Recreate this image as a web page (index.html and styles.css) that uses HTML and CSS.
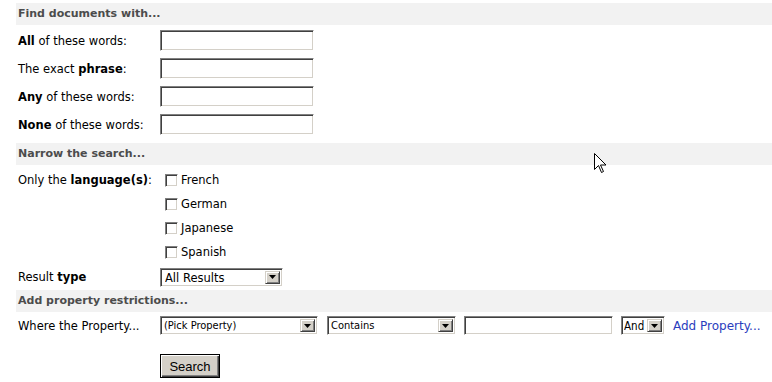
FILE: index.html
```html
<!DOCTYPE html>
<html lang="en">
<head>
  <meta charset="UTF-8">
  <title>Advanced Search</title>
  <link rel="stylesheet" href="styles.css">
</head>
<body>

  <form class="search" onsubmit="return false">

    <div class="section-head">Find documents with...</div>
    <div class="fields">
      <div class="row"><label class="label" for="allWords"><b>All</b> of these words:</label><input class="text" id="allWords" type="text"></div>
      <div class="row"><label class="label" for="phrase">The exact <b>phrase</b>:</label><input class="text" id="phrase" type="text"></div>
      <div class="row"><label class="label" for="anyWords"><b>Any</b> of these words:</label><input class="text" id="anyWords" type="text"></div>
      <div class="row"><label class="label" for="noneWords"><b>None</b> of these words:</label><input class="text" id="noneWords" type="text"></div>
    </div>

    <div class="section-head">Narrow the search...</div>
    <div class="narrow">
      <div class="lang-row">
        <span class="label">Only the <b>language(s)</b>:</span>
        <div class="langs">
          <label class="check"><input type="checkbox"> French</label>
          <label class="check"><input type="checkbox"> German</label>
          <label class="check"><input type="checkbox"> Japanese</label>
          <label class="check"><input type="checkbox"> Spanish</label>
        </div>
      </div>
      <div class="type-row">
        <span class="label">Result <b>type</b></span>
        <div class="combo combo-type">
          <select><option>All Results</option></select>
          <span class="combo-btn"><svg width="7" height="4" viewBox="0 0 7 4"><path d="M0 0h7L3.5 4z" fill="#000"/></svg></span>
        </div>
      </div>
    </div>

    <div class="section-head">Add property restrictions...</div>
    <div class="prop-row">
      <span class="label">Where the Property...</span>
      <div class="combo combo-prop">
        <select><option>(Pick Property)</option></select>
        <span class="combo-btn"><svg width="7" height="4" viewBox="0 0 7 4"><path d="M0 0h7L3.5 4z" fill="#000"/></svg></span>
      </div>
      <div class="combo combo-op">
        <select><option>Contains</option></select>
        <span class="combo-btn"><svg width="7" height="4" viewBox="0 0 7 4"><path d="M0 0h7L3.5 4z" fill="#000"/></svg></span>
      </div>
      <input class="text text-value" type="text">
      <div class="combo combo-and">
        <select><option>And</option></select>
        <span class="combo-btn"><svg width="7" height="4" viewBox="0 0 7 4"><path d="M0 0h7L3.5 4z" fill="#000"/></svg></span>
      </div>
      <a class="add-prop" href="#">Add Property...</a>
    </div>

    <div class="actions">
      <button class="search-btn" type="submit">Search</button>
    </div>

  </form>

  <!-- mouse pointer, sits over the page -->
  <svg class="cursor" width="13" height="21" viewBox="0 0 13 21">
    <path d="M0.5 0.5v16l4-4 3 7 2-1-3-6.5h5.5z" fill="#fff" stroke="#000" stroke-width="1"/>
  </svg>

</body>
</html>
```

FILE: styles.css
```css
body {
  margin: 0;
  font-family: "DejaVu Sans", Verdana, sans-serif;
  font-size: 11.5px;
  color: #000;
  background: #fff;
  height: 382px;
  overflow: hidden;
  position: relative;
}

.search {
  margin: 3px 0 0 16px;
}

.section-head {
  background-color: #f2f2f2;
  height: 22px;
  line-height: 22px;
  padding-left: 2px;
  font-size: 11px;
  font-weight: bold;
  color: #4c4c4c;
}

.label {
  width: 142px;
  padding-left: 2px;
  flex-shrink: 0;
}

.fields {
  padding: 5px 0 1px;
}

.row {
  display: flex;
  align-items: center;
  height: 21px;
  margin-bottom: 7px;
}

input.text {
  width: 154px;
  height: 21px;
  box-sizing: border-box;
  margin: 0;
  padding: 1px 3px;
  border: 1px solid;
  border-color: #808080 #fff #fff #808080;
  box-shadow: inset 1px 1px 0 #404040, inset -1px -1px 0 #d4d0c8;
  font: 11px "DejaVu Sans", sans-serif;
  outline: none;
}

/* languages */
.narrow {
  padding-top: 3px;
}

.lang-row {
  display: flex;
  align-items: flex-start;
}

.lang-row .label {
  line-height: 24px;
}

.langs {
  display: flex;
  flex-direction: column;
  padding-left: 5px;
}

.check {
  display: flex;
  align-items: center;
  gap: 3px;
  height: 24px;
}

.check input {
  appearance: none;
  -webkit-appearance: none;
  width: 13px;
  height: 13px;
  margin: 0;
  background: #fff;
  border: 1px solid;
  border-color: #808080 #fff #fff #808080;
  box-shadow: inset 1px 1px 0 #404040, inset -1px -1px 0 #d4d0c8;
}

.type-row {
  display: flex;
  align-items: center;
  height: 24px;
  margin-top: 1px;
  margin-bottom: 1px;
}

/* combo boxes */
.combo {
  display: flex;
  align-items: stretch;
  height: 19px;
  box-sizing: border-box;
  padding: 2px;
  background: #fff;
  border: 1px solid;
  border-color: #808080 #fff #fff #808080;
  box-shadow: inset 1px 1px 0 #404040, inset -1px -1px 0 #d4d0c8;
}

.combo select {
  appearance: none;
  -webkit-appearance: none;
  flex: 1;
  min-width: 0;
  border: none;
  background: transparent;
  padding: 0 0 0 1px;
  margin: 0;
  font: 11.5px "DejaVu Sans", sans-serif;
  color: #000;
  outline: none;
}

.combo-btn {
  width: 15px;
  flex-shrink: 0;
  display: flex;
  align-items: center;
  justify-content: center;
  background: #d4d0c8;
  box-sizing: border-box;
  border: 1px solid;
  border-color: #d4d0c8 #404040 #404040 #d4d0c8;
  box-shadow: inset 1px 1px 0 #fff, inset -1px -1px 0 #808080;
}

.combo-type {
  width: 123px;
}

.combo-type select {
  padding-left: 2px;
}

.combo-prop {
  width: 158px;
}

.combo-op {
  width: 129px;
  margin-left: 9px;
}

.combo-prop select,
.combo-op select {
  font: 11px "DejaVu Sans Condensed", Tahoma, sans-serif;
}

.combo-and {
  width: 44px;
  margin-left: 8px;
}

.combo-and select {
  font: 11.5px "DejaVu Sans Condensed", Tahoma, sans-serif;
  padding: 0;
}

/* property row */
.prop-row {
  display: flex;
  align-items: center;
  height: 19px;
  margin-top: 4px;
}

.text-value {
  margin-left: 8px !important;
  width: 149px !important;
  height: 19px !important;
}

.add-prop {
  margin-left: 8px;
  font-size: 12px;
  color: #2a3dbd;
  text-decoration: none;
}

.actions {
  padding: 19px 0 0 144px;
}

.search-btn {
  width: 60px;
  height: 24px;
  padding: 0;
  font: 13px "Liberation Sans", Arial, sans-serif;
  color: #000;
  background: #d4d0c8;
  border: 1px solid #000;
  box-shadow: inset 1px 1px 0 #fff, inset -1px -1px 0 #404040, inset -2px -2px 0 #808080;
}

.cursor {
  position: absolute;
  left: 594px;
  top: 153px;
}
```
